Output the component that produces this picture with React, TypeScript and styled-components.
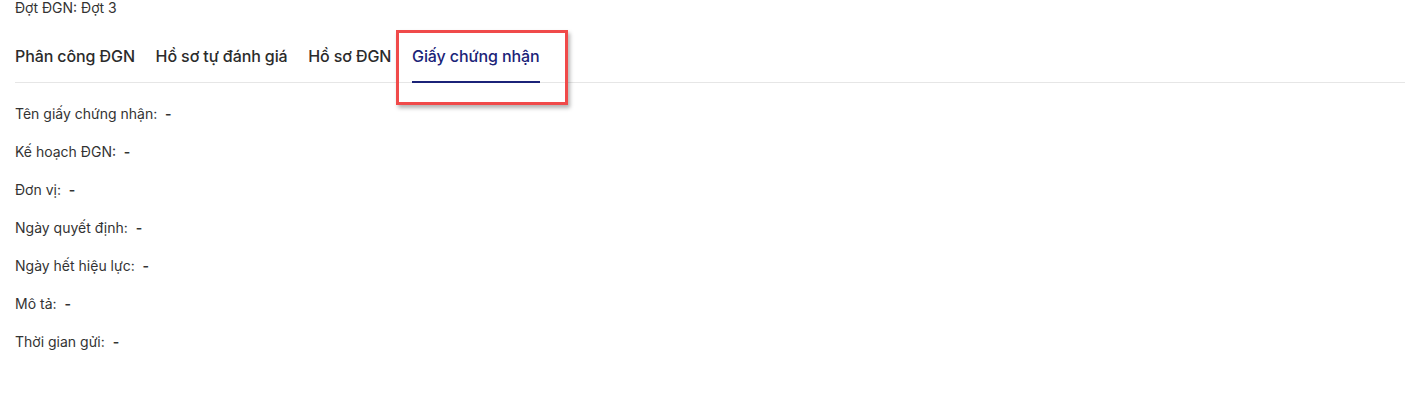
import React from 'react';
import styled, { createGlobalStyle } from 'styled-components';

const GlobalStyle = createGlobalStyle`
    body {
        margin: 0;
        background: #ffffff;
        font-family: Inter, "Noto Sans", sans-serif;
        color: #333333;
    }
`;

const Page = styled.div`
    position: relative;
    padding: 0 0 0 15px;
    width: 1405px;
    height: 412px;
    box-sizing: border-box;
    overflow: hidden;
`;

const Round = styled.div`
    font-size: 14px;
    line-height: 17px;
    margin-top: -1px;
    color: #333333;
`;

const Tabs = styled.div`
    display: flex;
    gap: 20.7px;
    margin-top: 30px;
    border-bottom: 1px solid #e6e6e6;
`;

const Tab = styled.div<{ $active?: boolean }>`
    font-size: 16px;
    font-weight: 500;
    line-height: 20px;
    letter-spacing: -0.1px;
    padding-bottom: 15px;
    margin-bottom: -1px;
    color: ${(p) => (p.$active ? '#1b2378' : '#2b2b2b')};
    border-bottom: 2px solid ${(p) => (p.$active ? '#1b2378' : 'transparent')};
`;

const Fields = styled.div`
    display: flex;
    flex-direction: column;
    gap: 21px;
    margin-top: 22px;
`;

const Field = styled.div`
    font-size: 14px;
    line-height: 17px;
    color: #333333;
    white-space: pre;
`;

const Empty = styled.span`
    font-weight: 600;
`;

const Highlight = styled.div`
    position: absolute;
    left: 396px;
    top: 30px;
    width: 172px;
    height: 75px;
    box-sizing: border-box;
    border: 3px solid #f04a4a;
    box-shadow: 2px 3px 4px rgba(0, 0, 0, 0.3);
    pointer-events: none;
`;

const tabs = ['Phân công ĐGN', 'Hồ sơ tự đánh giá', 'Hồ sơ ĐGN', 'Giấy chứng nhận'];

const fields = [
    'Tên giấy chứng nhận',
    'Kế hoạch ĐGN',
    'Đơn vị',
    'Ngày quyết định',
    'Ngày hết hiệu lực',
    'Mô tả',
    'Thời gian gửi',
];

const App = () => {
    return (
        <Page>
            <GlobalStyle />
            <Round>Đợt ĐGN: Đợt 3</Round>
            <Tabs>
                {tabs.map((t, i) => (
                    <Tab key={t} $active={i === 3}>{t}</Tab>
                ))}
            </Tabs>
            <Fields>
                {fields.map((f) => (
                    <Field key={f}>{f}:  <Empty>-</Empty></Field>
                ))}
            </Fields>
            <Highlight />
        </Page>
    );
};

export default App;
